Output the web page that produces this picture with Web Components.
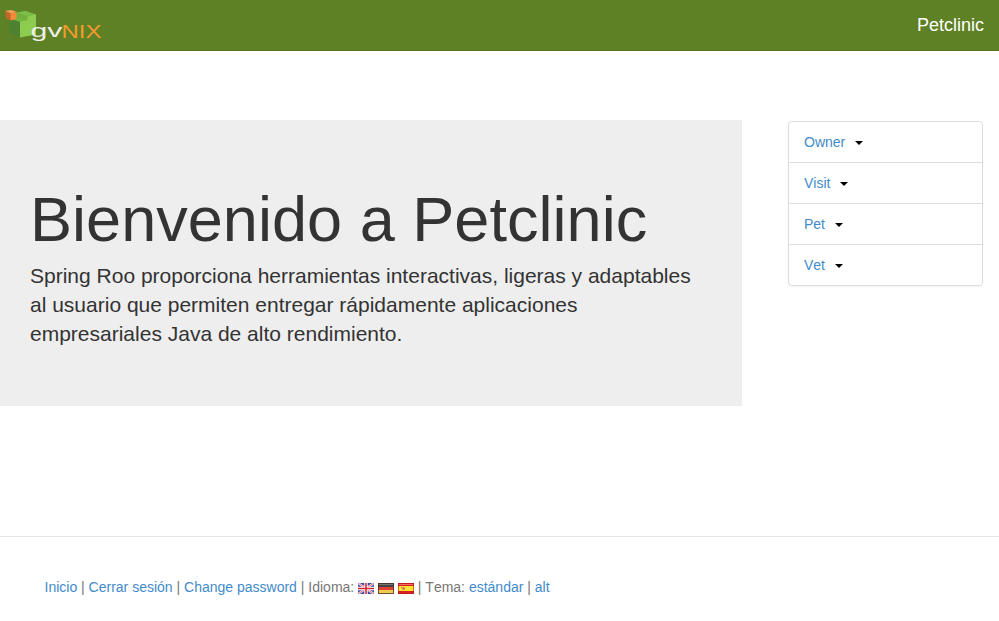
<!DOCTYPE html>
<html lang="es">
<head>
<meta charset="utf-8">
<title>Petclinic</title>
<style>
body{margin:0;background:#fff;color:#333;font:14px/20px "Liberation Sans",Arial,sans-serif;font-kerning:none}
</style>
</head>
<body>
<pet-page>
  <top-bar slot="header">Petclinic</top-bar>
  <welcome-panel slot="main">
    <span slot="title">Bienvenido a Petclinic</span>
    Spring Roo proporciona herramientas interactivas, ligeras y adaptables al usuario que permiten entregar rápidamente aplicaciones empresariales Java de alto rendimiento.
  </welcome-panel>
  <side-menu slot="aside">
    <menu-entry>Owner</menu-entry>
    <menu-entry>Visit</menu-entry>
    <menu-entry>Pet</menu-entry>
    <menu-entry>Vet</menu-entry>
  </side-menu>
  <page-footer slot="footer"></page-footer>
</pet-page>
<script>
const define = (name, html) => customElements.define(name, class extends HTMLElement {
  constructor() {
    super();
    this.attachShadow({ mode: 'open' }).innerHTML = html;
  }
});

define('pet-page', `
<style>
:host{display:block;height:621px;overflow:hidden}
main{display:flex;align-items:flex-start;justify-content:space-between;padding:69px 16px 0 0;height:416px}
</style>
<slot name="header"></slot>
<main><slot name="main"></slot><slot name="aside"></slot></main>
<slot name="footer"></slot>`);

define('brand-logo', `
<style>:host{display:block;width:110px;height:50px}svg{display:block}</style>
<svg width="110" height="50" viewBox="0 0 110 50">
  <path d="M9 20l3-1 8 2.500V37.500L9 33z" fill="#4f8132"/>
  <path d="M14 13l11-2 11 3.500V19l-16 3-6-2z" fill="#70b040"/>
  <path d="M17 12.500l9-1.500 10 3.500-8.500 1.800z" fill="#7cbd49"/>
  <path d="M20 21.500l7.500-1.500v-3.800L36 14.500V34.500L20 37.500z" fill="#8dcc4e"/>
  <path d="M15 19.500l4-1.500 8.500 2-7.500 1.700z" fill="#76b744"/>
  <path d="M5 11l6-1 6 2-6 1.600z" fill="#f9a055"/>
  <path d="M5 11l5.500 2.500v7L6 18.300z" fill="#c5652a"/>
  <path d="M10.500 13.500l6-1.200v6.700l-6 1.500z" fill="#f58a3a"/>
  <g font-family="Liberation Sans">
    <text x="30.500" y="37" font-size="18" textLength="32" lengthAdjust="spacingAndGlyphs" fill="#eef0e9">gv</text>
    <text x="61.500" y="37.500" font-size="19" textLength="40" lengthAdjust="spacingAndGlyphs" fill="#f29b30">NIX</text>
  </g>
</svg>`);

define('top-bar', `
<style>
:host{display:flex;justify-content:space-between;box-sizing:border-box;height:51px;background:#5f8125;border-bottom:1px solid #54751b;color:#fff;font-size:18px;line-height:20px}
.name{padding:15px 15px 0 0}
</style>
<brand-logo></brand-logo><div class="name"><slot></slot></div>`);

define('welcome-panel', `
<style>
:host{display:block;box-sizing:border-box;width:742px;height:286px;padding:68px 30px 0;background:#eee}
h1{margin:0 0 10px;font-size:63px;line-height:63px;font-weight:500;letter-spacing:.04px}
p{margin:0;font-size:21px;line-height:29px;font-weight:400;color:#333}
</style>
<h1><slot name="title"></slot></h1><p><slot></slot></p>`);

define('side-menu', `
<style>
:host{display:block;box-sizing:border-box;width:195px;margin-top:1px;border:1px solid #ddd;border-radius:4px;box-shadow:0 1px 2px rgba(0,0,0,.05)}
</style><slot></slot>`);

define('menu-entry', `
<style>
:host{display:flex;align-items:center;box-sizing:border-box;height:41px;padding:0 15px;border-bottom:1px solid #ddd;color:#428bca}
:host(:last-child){border-bottom:0;height:40px}
i{margin:1px 0 0 10px;border-top:4px solid #000;border-left:4px solid transparent;border-right:4px solid transparent}
</style><slot></slot><i></i>`);

const flags = {
  en: `<rect width="16" height="11" fill="#3a4fa5"/><path d="M0 0l16 11M16 0L0 11" stroke="#fff" stroke-width="2"/><path d="M0 0l16 11M16 0L0 11" stroke="#e23b45" stroke-width=".8"/><path d="M8 0v11M0 5.500h16" stroke="#fff" stroke-width="3.400"/><path d="M8 0v11M0 5.500h16" stroke="#dc2634" stroke-width="1.600"/>`,
  de: `<rect width="16" height="11" fill="#444"/><rect y="4" width="16" height="4" fill="#df4036"/><rect y="7" width="16" height="4" fill="#efcb52"/><path d="M1 1.500h14" stroke="#777"/><rect x=".5" y=".5" width="15" height="10" fill="none" stroke="#4b3327" stroke-opacity=".8"/>`,
  es: `<rect width="16" height="11" fill="#d51f20"/><rect y="3" width="16" height="5" fill="#ffe52e"/><path d="M1 1.500h14" stroke="#ef6d62"/><path d="M4 4h3v3H4z" fill="#dc9a62"/><path d="M3 4.500h1M5 5.500h2" stroke="#c9703b"/><rect x=".5" y=".5" width="15" height="10" fill="none" stroke="#c61515" stroke-opacity=".6"/>`
};
customElements.define('flag-icon', class extends HTMLElement {
  connectedCallback() {
    if (this.shadowRoot) return;
    this.attachShadow({ mode: 'open' }).innerHTML =
      '<style>:host{display:inline-block;width:16px;height:11px;vertical-align:-2px}svg{display:block}</style>' +
      '<svg width="16" height="11" viewBox="0 0 16 11">' + flags[this.getAttribute('code')] + '</svg>';
  }
});

define('page-footer', `
<style>
:host{display:block;border-top:1px solid #e5e5e5;padding:40px 0 0 44.500px;color:#777;white-space:nowrap}
a{color:#428bca;text-decoration:none}
</style>
<a>Inicio</a> | <a>Cerrar sesión</a> | <a>Change password</a> | Idioma: <flag-icon code="en"></flag-icon> <flag-icon code="de"></flag-icon> <flag-icon code="es"></flag-icon> | Tema: <a>estándar</a> | <a>alt</a>`);
</script>
</body>
</html>
